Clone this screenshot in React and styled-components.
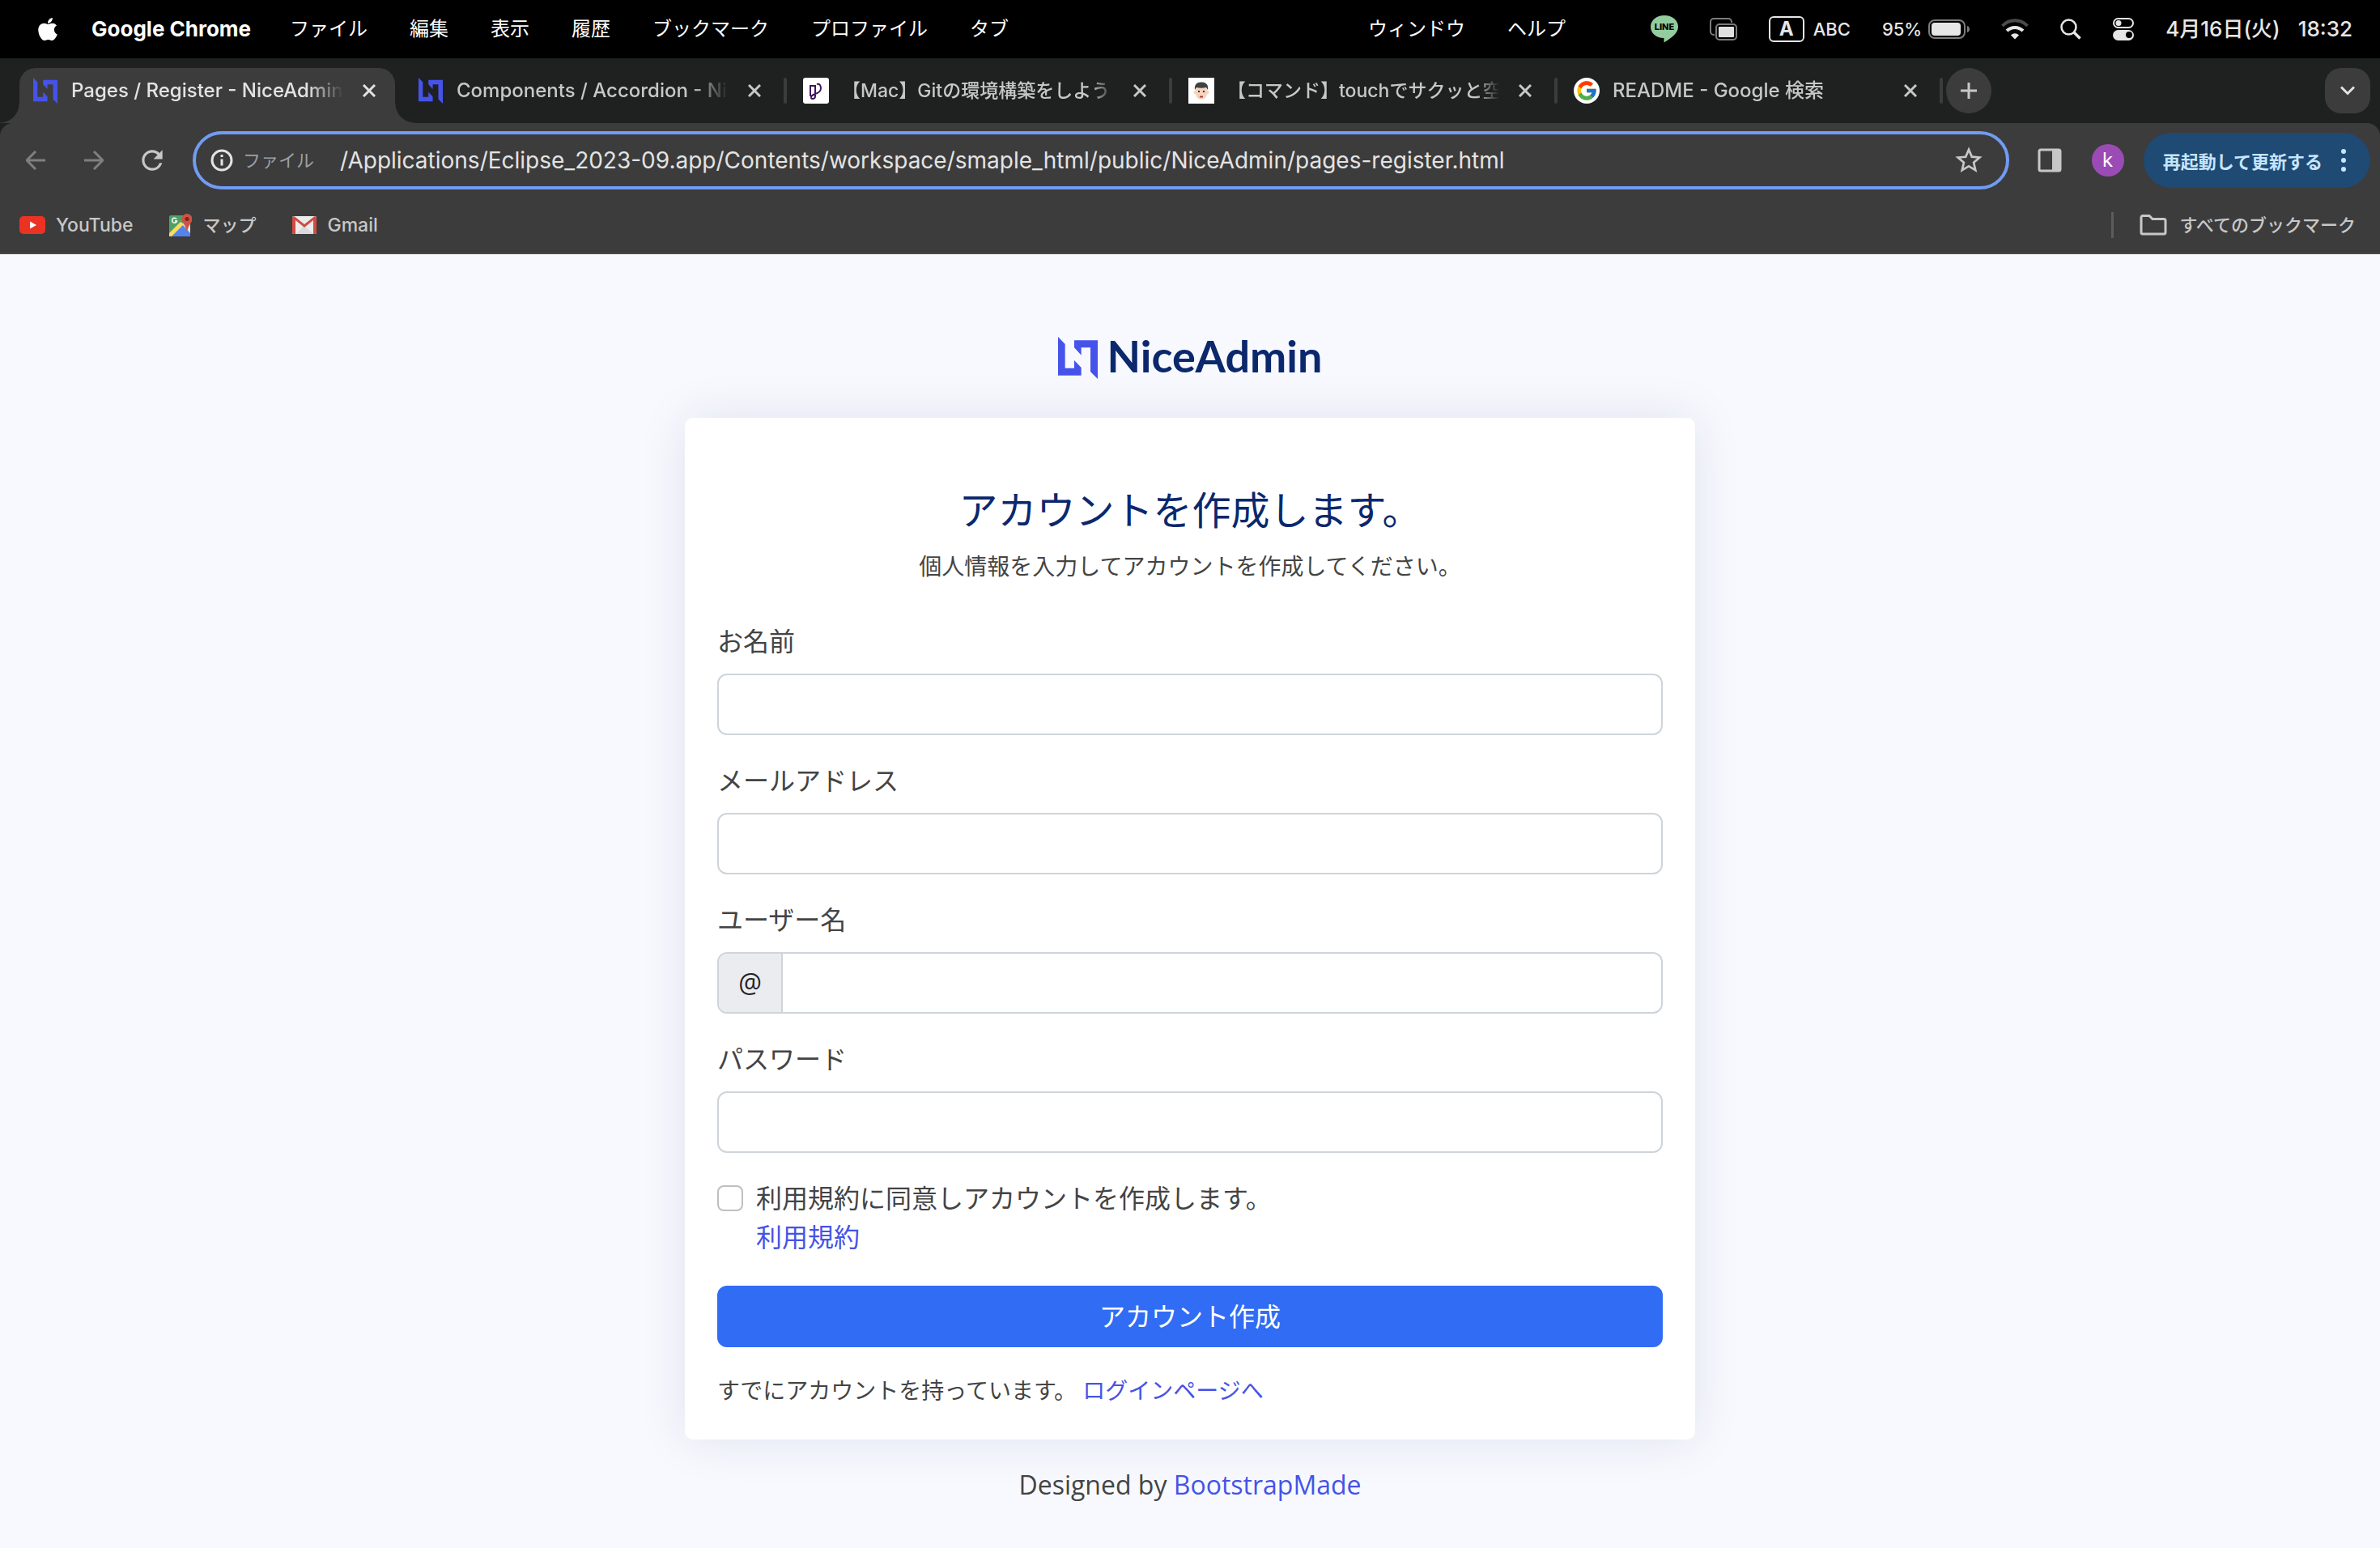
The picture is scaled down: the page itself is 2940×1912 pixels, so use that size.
import React from "react";
import styled, { createGlobalStyle, css } from "styled-components";
import { FaApple } from "react-icons/fa";
import { FcGoogle } from "react-icons/fc";
import { MdRefresh, MdStarBorder } from "react-icons/md";

const uiFont = `Inter, "Noto Sans CJK JP", sans-serif`;
const pageFont = `"Open Sans", "Noto Sans CJK JP", sans-serif`;

const GlobalStyle = createGlobalStyle`
  *, *::before, *::after { box-sizing: border-box; }
  body { margin: 0; background: #f8f9fe; font-family: ${pageFont}; }
  button, input { font: inherit; color: inherit; }
  svg { display: block; flex: none; }
`;

const Screen = styled.div`
  min-height: 100vh;
  display: flex;
  flex-direction: column;
`;

/* ---------- system menu bar ---------- */

const MenuBar = styled.header`
  height: 72px;
  padding: 0 34px 0 43px;
  display: flex;
  align-items: center;
  background: #000;
  color: #fff;
  font: 400 24px/36px ${uiFont};
  white-space: nowrap;
`;

const Menus = styled.nav`
  display: flex;
  align-items: center;
  gap: 52px;
`;

const MenuItem = styled.button`
  padding: 0;
  border: 0;
  background: none;
`;

const AppName = styled(MenuItem)`
  margin: 0 -4px 0 -14px;
  font-weight: 700;
  font-size: 26px;
`;

const Notch = styled.div`
  width: 340px;
`;

const Status = styled.div`
  margin-left: auto;
  display: flex;
  align-items: center;
  gap: 39px;
  color: #e6e6e6;
`;

const StatusGroup = styled.div`
  display: flex;
  align-items: center;
  gap: ${(p) => p.$gap}px;
  font-weight: 500;
  font-size: 22px;
`;

const InputMode = styled.span`
  width: 44px;
  height: 32px;
  border: 2px solid #e6e6e6;
  border-radius: 6px;
  display: grid;
  place-items: center;
  font-weight: 700;
  font-size: 24px;
  line-height: 28px;
`;

const Clock = styled.time`
  display: flex;
  gap: 22px;
  font-weight: 500;
  font-size: 26px;
`;

/* ---------- browser chrome ---------- */

const Chrome = styled.div`
  background: #1f2121;
  font-family: ${uiFont};
  color: #c7c7c7;
`;

const TabStrip = styled.div`
  height: 80px;
  padding: 12px 12px 0 24px;
  display: flex;
`;

const Tab = styled.div`
  position: relative;
  width: 464px;
  height: 68px;
  margin-right: 12px;
  padding: 0 16px 12px;
  display: flex;
  align-items: center;
  gap: 16px;
  border-radius: 20px 20px 0 0;
  ${(p) =>
    p.$active
      ? css`
          background: #3c3c3c;
          color: #e3e3e3;
          &::before,
          &::after {
            content: "";
            position: absolute;
            bottom: 0;
            width: 24px;
            height: 24px;
          }
          &::before {
            right: 100%;
            background: radial-gradient(circle at 0 0, transparent 23px, #3c3c3c 24px);
          }
          &::after {
            left: 100%;
            background: radial-gradient(circle at 100% 0, transparent 23px, #3c3c3c 24px);
          }
        `
      : css`
          &::after {
            content: "";
            position: absolute;
            right: -8px;
            top: 12px;
            width: 4px;
            height: 32px;
            border-radius: 2px;
            background: #3c3c3c;
          }
        `}
`;

const TabIcon = styled.span`
  width: 32px;
  height: 32px;
  display: grid;
  place-items: center;
  overflow: hidden;
  border-radius: ${(p) => p.$radius || 0}px;
  background: ${(p) => (p.$plain ? "none" : "#fff")};
`;

const TabLabel = styled.button`
  flex: 1;
  min-width: 0;
  padding: 0;
  border: 0;
  background: none;
  overflow: hidden;
  text-align: left;
  white-space: nowrap;
  font-weight: 500;
  font-size: ${(p) => (p.$wide ? 23 : 24)}px;
  line-height: 36px;
  mask-image: linear-gradient(90deg, #000 calc(100% - ${(p) => (p.$wide ? 28 : 44)}px), transparent);
`;

const IconButton = styled.button`
  width: ${(p) => p.$size || 32}px;
  height: ${(p) => p.$size || 32}px;
  padding: 0;
  border: 0;
  display: grid;
  place-items: center;
  background: ${(p) => p.$bg || "none"};
  border-radius: ${(p) => p.$radius || 0}px;
  color: ${(p) => p.$color || "inherit"};
  ${(p) => p.$end && "margin-left: auto;"}
`;

const Toolbar = styled.div`
  height: 92px;
  padding: 0 12px 0 8px;
  display: flex;
  align-items: center;
  background: #3c3c3c;
  border-radius: 16px 16px 0 0;
`;

const Omnibox = styled.form`
  flex: 1;
  height: 72px;
  margin: 0 14px;
  padding: 0 26px 0 18px;
  display: flex;
  align-items: center;
  border: 4px solid #729cf2;
  border-radius: 36px;
`;

const Scheme = styled.label`
  padding: 0 32px 0 12px;
  color: #9aa0a6;
  font-size: 22px;
  line-height: 36px;
`;

const Address = styled.input`
  flex: 1;
  min-width: 0;
  padding: 0;
  border: 0;
  outline: 0;
  background: none;
  color: #e3e3e3;
  font-size: 28px;
  line-height: 36px;
`;

const Avatar = styled.button`
  width: 40px;
  height: 40px;
  margin: 0 24px 0 16px;
  padding: 0;
  border: 0;
  border-radius: 50%;
  background: #9b4bb5;
  color: #fff;
  font-size: 24px;
  line-height: 40px;
`;

const UpdateButton = styled.button`
  height: 68px;
  padding: 0 30px 0 24px;
  border: 0;
  border-radius: 34px;
  display: flex;
  align-items: center;
  gap: 23px;
  background: #1f4a73;
  color: #c5e5fd;
  font-weight: 700;
  font-size: 22px;
`;

const Bookmarks = styled.nav`
  height: 70px;
  padding: 0 30px 0 24px;
  display: flex;
  align-items: center;
  gap: 45px;
  background: #3c3c3c;
  border-bottom: 2px solid #4b4849;
`;

const Bookmark = styled.a`
  display: flex;
  align-items: center;
  gap: ${(p) => p.$gap || 13}px;
  color: #c7c7c7;
  text-decoration: none;
  font-weight: 500;
  font-size: ${(p) => (p.$wide ? 22 : 23)}px;
  line-height: 36px;
`;

const AllBookmarks = styled.div`
  margin-left: auto;
  padding-left: 32px;
  border-left: 3px solid #5c5c5c;
  height: 32px;
  display: flex;
  align-items: center;
`;

/* ---------- page ---------- */

const Page = styled.main`
  flex: 1;
  padding: 102px 24px 54px;
  display: flex;
  flex-direction: column;
  align-items: center;
  background: #f8f9fe;
  color: #444;
  font-size: 32px;
  line-height: 48px;
`;

const Brand = styled.a`
  display: flex;
  align-items: flex-start;
  gap: 12px;
  margin-bottom: 48px;
  color: #0b286d;
  text-decoration: none;
  font: 700 54px/48px Lato, sans-serif;
`;

const Card = styled.section`
  width: 100%;
  max-width: 1248px;
  padding: 84px 40px 40px;
  background: #fff;
  border-radius: 10px;
  box-shadow: 0 0 60px rgba(1, 41, 112, 0.1);
`;

const Title = styled.h1`
  margin: 0 0 18px;
  color: #0b286d;
  font-weight: 400;
  font-size: 48px;
  line-height: 60px;
  text-align: center;
`;

const Note = styled.p`
  margin: 0;
  font-size: 28px;
  line-height: 42px;
  text-align: ${(p) => (p.$center ? "center" : "left")};
`;

const Form = styled.form`
  margin-top: 48px;
  display: flex;
  flex-direction: column;
  gap: 32px;
`;

const Field = styled.div`
  display: flex;
  flex-direction: column;
  gap: 16px;
`;

const InputGroup = styled.div`
  height: 76px;
  display: flex;
  overflow: hidden;
  background: #fff;
  border: 2px solid #ced4da;
  border-radius: 12px;
`;

const Prefix = styled.span`
  width: 79px;
  display: grid;
  place-items: center;
  background: #ebecf0;
  border-right: 2px solid #ced4da;
  color: #212529;
`;

const TextInput = styled.input`
  flex: 1;
  min-width: 0;
  padding: 0 24px;
  border: 0;
  outline: 0;
  background: none;
`;

const Agreement = styled.div`
  display: flex;
  align-items: flex-start;
  gap: 16px;
  margin-bottom: 4px;
`;

const Checkbox = styled.input`
  appearance: none;
  width: 32px;
  height: 32px;
  margin: 8px 0 0;
  border: 2px solid #bfbfbf;
  border-radius: 8px;
  background: #fff;
`;

const Link = styled.a`
  color: #4653e6;
  text-decoration: none;
`;

const Submit = styled.button`
  height: 76px;
  border: 0;
  border-radius: 12px;
  background: #316cf4;
  color: #fff;
`;

const Credits = styled.footer`
  margin-top: 32px;
`;

/* ---------- drawings ---------- */

const BrandMark = ({ width, height }) => (
  <svg width={width} height={height} viewBox="0 0 147 156" fill="#4653ea">
    <path d="M0 0 26 27V116H60V87L86 114V143H0Z" />
    <path d="M60 13H147V156L120 129V40H86V68L60 40Z" />
  </svg>
);

const CloseIcon = () => (
  <svg width="16" height="16" viewBox="0 0 16 16" stroke="currentColor" strokeWidth="3">
    <path d="M1 1 15 15M15 1 1 15" />
  </svg>
);

const ArrowIcon = ({ flip }) => (
  <svg width="24" height="24" viewBox="0 0 24 24" fill="none" stroke="currentColor" strokeWidth="3">
    <path d={flip ? "M0 12H22M12 1 23 12 12 23" : "M24 12H2M12 1 1 12 12 23"} />
  </svg>
);

const InfoIcon = () => (
  <svg width="28" height="28" viewBox="0 0 28 28" fill="none" stroke="#e3e3e3" strokeWidth="3">
    <circle cx="14" cy="14" r="12" />
    <path d="M14 12.500V20.500M14 7V10" />
  </svg>
);

const LineIcon = () => (
  <svg width="34" height="34" viewBox="0 0 34 34">
    <path fill="#93cd9f" d="M17 0C26.500 0 34 6 34 14c0 8-8.500 14-17.500 19.500V28C7 28 0 22 0 14 0 6 7.500 0 17 0Z" />
    <text x="17" y="18" textAnchor="middle" fontFamily="Inter, sans-serif" fontWeight="800" fontSize="11" fill="#000">LINE</text>
  </svg>
);

const MirrorIcon = () => (
  <svg width="34" height="28" viewBox="0 0 34 28" fill="none" stroke="#7c7c7c" strokeWidth="2">
    <path d="M6 21H5a4 4 0 0 1-4-4V5a4 4 0 0 1 4-4H23a4 4 0 0 1 4 4V6" />
    <rect x="8" y="8" width="25" height="19" rx="4" />
    <rect x="11" y="11" width="19" height="13" rx="1" fill="#e0e0e0" stroke="none" />
  </svg>
);

const BatteryIcon = () => (
  <svg width="51" height="24" viewBox="0 0 51 24">
    <rect x="1" y="1" width="44" height="22" rx="7" fill="none" stroke="#7c7c7c" strokeWidth="2" />
    <rect x="4" y="4" width="36" height="16" rx="4" fill="#e6e6e6" />
    <path d="M48 8c4 1 4 7 0 8Z" fill="#7c7c7c" />
  </svg>
);

const WifiIcon = () => (
  <svg width="34" height="26" viewBox="0 0 34 26" fill="none" strokeWidth="4">
    <path d="M1.500 9C10 0 24 0 32.500 9" stroke="#4a4a4a" />
    <path d="M7 15C12.500 9.500 21.500 9.500 27 15" stroke="#e6e6e6" />
    <path d="M12 20.500C15 17.500 19 17.500 22 20.500L17 25.500Z" fill="#e6e6e6" />
  </svg>
);

const SearchIcon = () => (
  <svg width="26" height="26" viewBox="0 0 26 26" fill="none" stroke="#e6e6e6">
    <circle cx="10.500" cy="10.500" r="9" strokeWidth="2.500" />
    <path d="M17 17 24.500 24.500" strokeWidth="3.500" />
  </svg>
);

const ControlIcon = () => (
  <svg width="26" height="28" viewBox="0 0 26 28">
    <rect x="1" y="1" width="24" height="11" rx="5.500" fill="none" stroke="#e6e6e6" strokeWidth="2" />
    <circle cx="7" cy="6.500" r="3.500" fill="#e6e6e6" />
    <rect y="15" width="26" height="13" rx="6.500" fill="#e6e6e6" />
    <circle cx="20" cy="21" r="4" fill="#000" />
  </svg>
);

const PenFavicon = () => (
  <svg width="32" height="32" viewBox="0 0 32 32" fill="none" stroke="#3c1560" strokeWidth="2">
    <path d="M15 20V10H9V23M15 20C12 21 9 23 10 25 11 27 15 26 15 23V20C19 19 22 16 22 13 22 9 20 7 17 8" />
  </svg>
);

const FaceFavicon = () => (
  <svg width="32" height="32" viewBox="0 0 32 32">
    <ellipse cx="16" cy="18" rx="7.500" ry="9" fill="#f6d3bd" />
    <circle cx="8.500" cy="18" r="2" fill="#f6d3bd" />
    <circle cx="23.500" cy="18" r="2" fill="#f6d3bd" />
    <path d="M8 15C7 8 11 5 17 5.500 23 6 25 10 24 15L22 12C18 13 14 13 10 12Z" fill="#3f4243" />
    <path d="M12 17h2M18 17h2" stroke="#333" strokeWidth="2" />
    <path d="M14 23.500h4" stroke="#a4423a" strokeWidth="2" />
  </svg>
);

const YouTubeIcon = () => (
  <svg width="32" height="24" viewBox="0 0 32 24">
    <rect y="1" width="32" height="22" rx="5" fill="#ea3323" />
    <path d="M13 7.500V16.500L21 12Z" fill="#fff" />
  </svg>
);

const MapsIcon = () => (
  <svg width="28" height="28" viewBox="0 0 28 28">
    <rect y="2" width="26" height="26" rx="2" fill="#4fa065" />
    <path d="M0 28 15 12 26 24V28Z" fill="#5383ec" />
    <path d="M15 12 26 24V10Z" fill="#e3e3e3" />
    <path d="M0 24 14 10 18 13 3 28H0Z" fill="#f8dc5c" />
    <path d="M9 6.500A3 3 0 1 0 9.500 9H7" fill="none" stroke="#fff" strokeWidth="1.500" />
    <path d="M22 0a6.500 6.500 0 0 1 6.500 6.500C28.500 11 23.500 14 22.500 21h-1C20.500 14 15.500 11 15.500 6.500A6.500 6.500 0 0 1 22 0Z" fill="#cf5246" />
    <circle cx="22" cy="6.500" r="2.500" fill="#7c241d" />
  </svg>
);

const GmailIcon = () => (
  <svg width="30" height="22" viewBox="0 0 30 22">
    <rect width="30" height="22" rx="2" fill="#ececec" />
    <path d="M4 22 15 12 26 22Z" fill="#dadada" />
    <path d="M0 2V20a2 2 0 0 0 2 2H4V5L15 14 26 5V22h2a2 2 0 0 0 2-2V2a2 2 0 0 0-3-1.500L15 10 3 .5A2 2 0 0 0 0 2Z" fill="#d04d40" />
  </svg>
);

const FolderIcon = () => (
  <svg width="34" height="26" viewBox="0 0 34 26" fill="none" stroke="#c7c7c7" strokeWidth="3">
    <path d="M4 1.500H12L16 5.500H30a2 2 0 0 1 2 2V22a2 2 0 0 1-2 2H4a2 2 0 0 1-2-2V3.500a2 2 0 0 1 2-2Z" />
  </svg>
);

const SidePanelIcon = () => (
  <svg width="30" height="30" viewBox="0 0 30 30">
    <rect x="2" y="2" width="26" height="26" rx="2" fill="none" stroke="#c7c7c7" strokeWidth="3" />
    <path d="M18 2H28V28H18Z" fill="#c7c7c7" />
  </svg>
);

const DotsIcon = () => (
  <svg width="6" height="28" viewBox="0 0 6 28" fill="#c5e5fd">
    <circle cx="3" cy="3" r="3" />
    <circle cx="3" cy="14" r="3" />
    <circle cx="3" cy="25" r="3" />
  </svg>
);

/* ---------- data ---------- */

const leftMenus = ["ファイル", "編集", "表示", "履歴", "ブックマーク", "プロファイル", "タブ"];
const rightMenus = ["ウィンドウ", "ヘルプ"];

const tabs = [
  { title: "Pages / Register - NiceAdmin", icon: <BrandMark width={30} height={32} />, plain: true, active: true },
  { title: "Components / Accordion - Ni", icon: <BrandMark width={30} height={32} />, plain: true },
  { title: "【Mac】Gitの環境構築をしよう", icon: <PenFavicon />, radius: 3, wide: true },
  { title: "【コマンド】touchでサクッと空", icon: <FaceFavicon />, wide: true },
  { title: "README - Google 検索", icon: <FcGoogle size={28} />, radius: 16 },
];

function TextField({ id, label, type = "text", prefix }) {
  return (
    <Field>
      <label htmlFor={id}>{label}</label>
      <InputGroup>
        {prefix && <Prefix>{prefix}</Prefix>}
        <TextInput id={id} type={type} />
      </InputGroup>
    </Field>
  );
}

export default function App() {
  return (
    <Screen>
      <GlobalStyle />
      <MenuBar>
        <Menus>
          <FaApple size={32} />
          <AppName>Google Chrome</AppName>
          {leftMenus.map((m) => (
            <MenuItem key={m}>{m}</MenuItem>
          ))}
          <Notch />
          {rightMenus.map((m) => (
            <MenuItem key={m}>{m}</MenuItem>
          ))}
        </Menus>
        <Status>
          <LineIcon />
          <MirrorIcon />
          <StatusGroup $gap={11}>
            <InputMode>A</InputMode>
            ABC
          </StatusGroup>
          <StatusGroup $gap={8}>
            95%
            <BatteryIcon />
          </StatusGroup>
          <WifiIcon />
          <SearchIcon />
          <ControlIcon />
          <Clock>
            <span>4月16日(火)</span>
            <span>18:32</span>
          </Clock>
        </Status>
      </MenuBar>

      <Chrome>
        <TabStrip>
          {tabs.map((t) => (
            <Tab key={t.title} $active={t.active}>
              <TabIcon $plain={t.plain} $radius={t.radius}>{t.icon}</TabIcon>
              <TabLabel $wide={t.wide}>{t.title}</TabLabel>
              <IconButton aria-label="閉じる">
                <CloseIcon />
              </IconButton>
            </Tab>
          ))}
          <IconButton aria-label="新しいタブ" $size={56} $radius={28} $bg="#3c3c3c">
            <svg width="20" height="20" viewBox="0 0 20 20" stroke="currentColor" strokeWidth="3">
              <path d="M10 0V20M0 10H20" />
            </svg>
          </IconButton>
          <IconButton aria-label="タブを検索" $size={56} $radius={20} $bg="#3c3c3c" $color="#e3e3e3" $end>
            <svg width="18" height="12" viewBox="0 0 18 12" fill="none" stroke="currentColor" strokeWidth="3">
              <path d="M1 1.500 9 9.500 17 1.500" />
            </svg>
          </IconButton>
        </TabStrip>

        <Toolbar>
          <IconButton aria-label="戻る" $size={72} $color="#7f7f7f">
            <ArrowIcon />
          </IconButton>
          <IconButton aria-label="進む" $size={72} $color="#7f7f7f">
            <ArrowIcon flip />
          </IconButton>
          <IconButton aria-label="再読み込み" $size={72}>
            <MdRefresh size={38} />
          </IconButton>
          <Omnibox onSubmit={(e) => e.preventDefault()}>
            <InfoIcon />
            <Scheme htmlFor="address">ファイル</Scheme>
            <Address
              id="address"
              defaultValue="/Applications/Eclipse_2023-09.app/Contents/workspace/smaple_html/public/NiceAdmin/pages-register.html"
            />
            <IconButton type="button" aria-label="ブックマークに追加" $size={40}>
              <MdStarBorder size={40} />
            </IconButton>
          </Omnibox>
          <IconButton aria-label="サイドパネル" $size={72}>
            <SidePanelIcon />
          </IconButton>
          <Avatar>k</Avatar>
          <UpdateButton>
            再起動して更新する
            <DotsIcon />
          </UpdateButton>
        </Toolbar>

        <Bookmarks>
          <Bookmark href="#youtube">
            <YouTubeIcon />
            YouTube
          </Bookmark>
          <Bookmark href="#maps" $wide>
            <MapsIcon />
            マップ
          </Bookmark>
          <Bookmark href="#gmail">
            <GmailIcon />
            Gmail
          </Bookmark>
          <AllBookmarks>
            <Bookmark href="#bookmarks" $wide $gap={15}>
              <FolderIcon />
              すべてのブックマーク
            </Bookmark>
          </AllBookmarks>
        </Bookmarks>
      </Chrome>

      <Page>
        <Brand href="#home">
          <BrandMark width={49} height={52} />
          NiceAdmin
        </Brand>
        <Card>
          <Title>アカウントを作成します。</Title>
          <Note $center>個人情報を入力してアカウントを作成してください。</Note>
          <Form onSubmit={(e) => e.preventDefault()}>
            <TextField id="name" label="お名前" />
            <TextField id="email" label="メールアドレス" type="email" />
            <TextField id="username" label="ユーザー名" prefix="@" />
            <TextField id="password" label="パスワード" type="password" />
            <Agreement>
              <Checkbox type="checkbox" id="terms" />
              <div>
                <label htmlFor="terms">利用規約に同意しアカウントを作成します。</label>
                <br />
                <Link href="#terms">利用規約</Link>
              </div>
            </Agreement>
            <Submit>アカウント作成</Submit>
            <Note>
              すでにアカウントを持っています。 <Link href="#login">ログインページへ</Link>
            </Note>
          </Form>
        </Card>
        <Credits>
          Designed by <Link href="#bootstrapmade">BootstrapMade</Link>
        </Credits>
      </Page>
    </Screen>
  );
}
